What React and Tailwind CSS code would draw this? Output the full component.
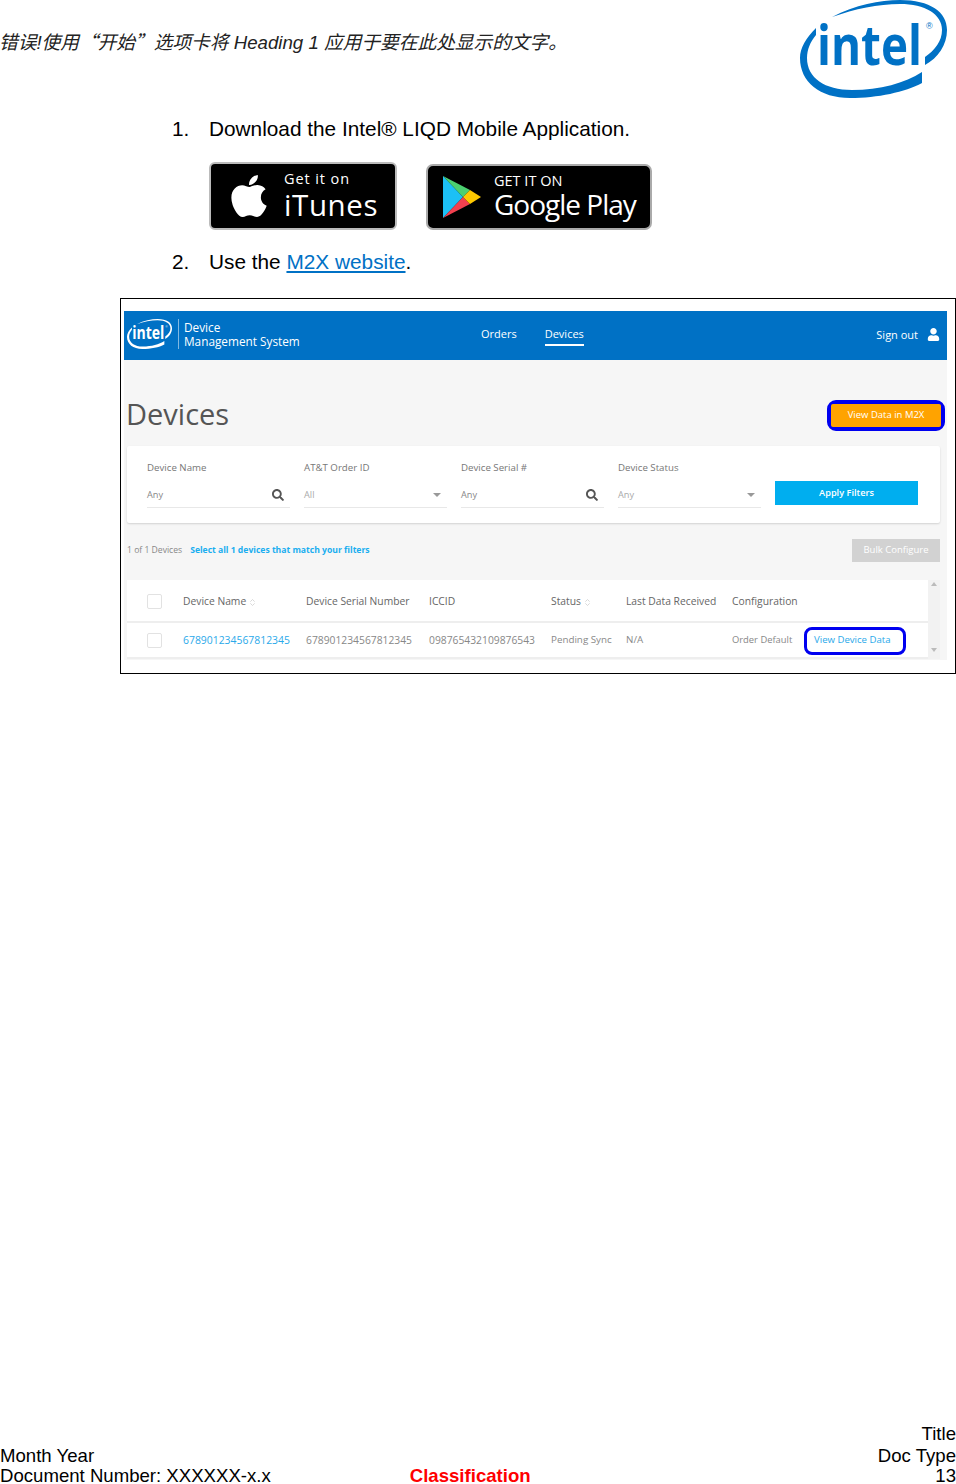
import { ChevronsUpDown } from 'lucide-react';
import { FaApple, FaSearch, FaUser } from 'react-icons/fa';

const doc = '[font-family:"Liberation_Sans","Noto_Sans_CJK_SC",sans-serif]';
const cjk = '[font-family:"Noto_Sans_CJK_SC",sans-serif]';
const app = '[font-family:"Open_Sans",sans-serif]';

const IntelLogo = ({ className = '', fill = '#0071c5' }) => (
  <svg viewBox="0 0 147 98" className={className} fill={fill}>
    <path d="M32 17C55 5 80 0 100 0C130 0 147 12 147 30C147 45 138 58 125 65L125 57C135 50 142 41 142 30C142 14 125 4 100 4C78 4 55 9 32 17Z" />
    <path d="M16 28C6 38 0 48 0 58C0 82 20 98 50 98C78 98 105 92 122 83L122 72C105 83 80 90 52 90C25 90 7 78 7 58C7 50 10 42 16 35Z" />
    <text x="17" y="65" fontSize="56" fontWeight="700" textLength="105" lengthAdjust="spacingAndGlyphs" fontFamily="Open Sans, sans-serif">intel</text>
    <text x="126" y="29" fontSize="9" fontFamily="Liberation Sans, sans-serif">®</text>
  </svg>
);

const PlayIcon = () => (
  <svg viewBox="0 0 40 44" className="w-[40px] h-[44px]">
    <polygon points="1,1 21,22 1,43" fill="#1cc0f5" />
    <polygon points="1,1 21,22 28,15" fill="#4cd070" />
    <polygon points="1,43 21,22 28,29" fill="#f2404f" />
    <polygon points="28,15 39,22 28,29 21,22" fill="#ffc900" />
  </svg>
);

const Filter = ({ label, value, icon, muted }) => (
  <div>
    <div className="h-[14px] leading-[14px] text-[9.7px] text-[#777]">{label}</div>
    <div className="mt-[8px] h-[25px] flex items-center justify-between border-b border-[#e8e8e8] pr-[6px]">
      <span className={`text-[9.2px] ${muted ? 'text-[#aaa]' : 'text-[#888]'}`}>{value}</span>
      {icon === 'search' ? (
        <FaSearch className="text-[12px] text-[#555]" />
      ) : (
        <span className="w-0 h-0 border-x-[4px] border-t-[4px] border-x-transparent border-t-[#999]" />
      )}
    </div>
  </div>
);

const Sort = () => <ChevronsUpDown size={9} className="inline ml-[2px] text-[#ccc]" />;

const Checkbox = () => <span className="block w-[15px] h-[15px] border border-[#e2e2e2] rounded-[2px] bg-white" />;

const tableCols = 'grid grid-cols-[36px_123px_123px_122px_75px_106px_72px_1fr] items-center pl-[20px]';

export default function App() {
  return (
    <div className={`w-[956px] h-[1484px] bg-white overflow-hidden flex flex-col text-black ${doc}`}>
      <header className="flex justify-between items-start h-[98px] pr-[9px]">
        <p className={`mt-[30px] -ml-[1px] text-[18.7px] leading-[22px] italic text-[#222] ${cjk}`}>
          错误<span className={doc}>!</span>使用“开始”选项卡将<span className={doc}> Heading 1 </span>应用于要在此处显示的文字。
        </p>
        <IntelLogo className="w-[147px] h-[98px]" />
      </header>

      <section className="pl-[172px] text-[20.8px] leading-[24px]">
        <div className="mt-[19px] flex">
          <span className="w-[37px]">1.</span>
          <span>Download the Intel® LIQD Mobile Application.</span>
        </div>
        <div className="mt-[21px] ml-[37px] h-[68px] flex items-start">
          <div className="w-[188px] h-[68px] flex items-center bg-black rounded-[6px] border-2 border-[#bbb] text-white">
            <FaApple className="ml-[14px] text-[48px] shrink-0" />
            <div className={`ml-[11px] ${app}`}>
              <div className="text-[14.5px] leading-[16px] tracking-[0.9px] mb-[1px]">Get it on</div>
              <div className="text-[29.5px] leading-[34px] font-medium tracking-[0.6px]">iTunes</div>
            </div>
          </div>
          <div className="ml-[29px] mt-[2px] w-[226px] h-[66px] flex items-center bg-black rounded-[7px] border-2 border-[#aaa] text-white">
            <div className="ml-[14px] shrink-0"><PlayIcon /></div>
            <div className={`ml-[12px] -mt-[3px] ${app}`}>
              <div className="text-[14.5px] leading-[16px]">GET IT ON</div>
              <div className="text-[28px] leading-[30px] tracking-[-1px] whitespace-nowrap">Google Play</div>
            </div>
          </div>
        </div>
        <div className="mt-[20px] flex">
          <span className="w-[37px]">2.</span>
          <span>Use the <span className="text-[#0071c5] underline">M2X website</span>.</span>
        </div>
      </section>

      <section className={`mt-[24px] ml-[120px] w-[836px] h-[376px] border border-black pt-[12px] pl-[3px] pr-[8px] ${app}`}>
        <nav className="h-[49px] bg-[#0071c5] text-white flex items-center pl-[3px] pr-[7px] pb-[3px]">
          <div className="w-[354px] flex items-center">
            <IntelLogo fill="#ffffff" className="w-[45px] h-[30px]" />
            <span className="ml-[6px] w-px h-[30px] bg-white/50" />
            <div className="ml-[5px] text-[11.8px] leading-[14px]">
              <div>Device</div>
              <div>Management System</div>
            </div>
          </div>
          <span className="text-[11px]">Orders</span>
          <span className="ml-[28px] text-[11px] border-b-2 border-white pb-[2px] mt-[4px]">Devices</span>
          <span className="ml-auto text-[11px] mt-[2px]">Sign out</span>
          <FaUser className="ml-[9px] text-[13px]" />
        </nav>

        <main className="h-[300px] bg-[#f6f6f6] pl-[3px] pr-[2px]">
          <div className="pt-[39px] h-[71px] flex items-center justify-between">
            <h1 className="text-[29px] text-[#555] leading-[32px] mb-[2px] -ml-[1px]">Devices</h1>
            <div className="border-[4px] border-[#0000f0] rounded-[9px]">
              <div className="w-[110px] h-[23px] bg-[#ffa300] rounded-[2px] text-white text-[9.5px] flex items-center justify-center">View Data in M2X</div>
            </div>
          </div>

          <div className="mt-[15px] mr-[5px] h-[77px] bg-white rounded-[2px] shadow-[0_1px_2px_rgba(0,0,0,0.15)] pl-[20px] pt-[15px] grid grid-cols-[repeat(5,143px)] gap-x-[14px]">
            <Filter label="Device Name" value="Any" icon="search" />
            <Filter label="AT&T Order ID" value="All" muted />
            <Filter label="Device Serial #" value="Any" icon="search" />
            <Filter label="Device Status" value="Any" muted />
            <button className="mt-[20px] h-[24px] bg-[#00aeef] text-white text-[9.2px] font-semibold">Apply Filters</button>
          </div>

          <div className="mt-[16px] mr-[5px] h-[23px] flex items-center justify-between">
            <div className="text-[8.6px] text-[#888]">
              1 of 1 Devices
              <span className="ml-[8px] text-[#1aaef0] font-bold">Select all 1 devices that match your filters</span>
            </div>
            <div className="w-[88px] h-[23px] bg-[#d2d2d2] text-white text-[9.5px] flex items-center justify-center">Bulk Configure</div>
          </div>

          <div className="mt-[18px] mr-[5px] h-[79px] flex">
            <div className="flex-1 bg-white text-[10.3px] text-[#666]">
              <div className={`${tableCols} h-[43px] pt-[2px] border-b-2 border-[#eee]`}>
                <Checkbox />
                <span>Device Name<Sort /></span>
                <span>Device Serial Number</span>
                <span>ICCID</span>
                <span>Status<Sort /></span>
                <span>Last Data Received</span>
                <span>Configuration</span>
              </div>
              <div className={`${tableCols} h-[36px] pt-[1px] border-b-2 border-[#eee] text-[#888]`}>
                <Checkbox />
                <span className="text-[#2aa9ea] text-[10.4px]">678901234567812345</span>
                <span>678901234567812345</span>
                <span>098765432109876543</span>
                <span className="whitespace-nowrap text-[9.8px]">Pending Sync</span>
                <span className="text-[9.8px]">N/A</span>
                <span className="whitespace-nowrap text-[9.4px]">Order Default</span>
                <div className="w-[102px] h-[28px] border-[3px] border-[#0000f0] rounded-[8px] flex items-center pl-[7px] text-[#2aa9ea] text-[9.6px] whitespace-nowrap">View Device Data</div>
              </div>
            </div>
            <div className="w-[12px] bg-[#f2f2f2] flex flex-col justify-between items-center pt-[2px] pb-[7px]">
              <span className="w-0 h-0 border-x-[3px] border-b-[4px] border-x-transparent border-b-[#bbb]" />
              <span className="w-0 h-0 border-x-[3px] border-t-[4px] border-x-transparent border-t-[#bbb]" />
            </div>
          </div>
        </main>
      </section>

      <footer className="mt-auto flex items-end text-[18.6px] leading-[21.5px]">
        <div>
          <div>Month Year</div>
          <div className="mt-[2px] leading-[16px]">Document Number: XXXXXX-x.x</div>
        </div>
        <div className="ml-[139px] leading-[16px] font-bold text-[#ff0000]">Classification</div>
        <div className="ml-auto text-right">
          <div>Title</div>
          <div>Doc Type</div>
          <div className="mt-[2px] leading-[16px]">13</div>
        </div>
      </footer>
    </div>
  );
}
